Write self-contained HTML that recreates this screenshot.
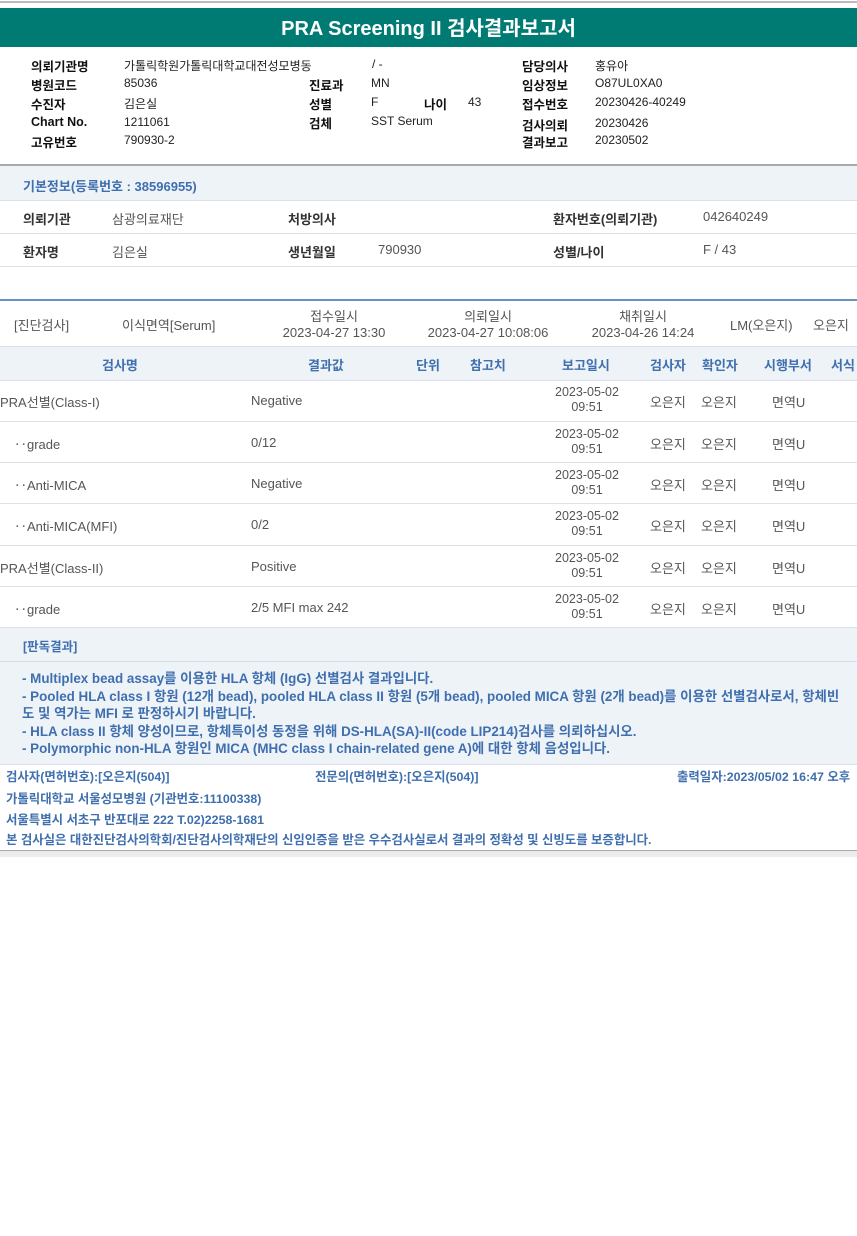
<!DOCTYPE html>
<html><head><meta charset="utf-8"><style>
body{margin:0;width:857px;height:1236px;background:#fff;position:relative;font-family:"Liberation Sans","Noto Sans CJK KR",sans-serif;overflow:hidden}
div{position:absolute;white-space:nowrap}
.t{font-size:12px;color:#222}
.b{font-weight:bold;font-size:12.5px;color:#111}
.g{font-size:13px;color:#555}
.gb{font-size:13px;color:#333;font-weight:bold}
.bl{color:#3f6fae;font-weight:bold;font-size:13px}
.c{text-align:center}
.h{font-size:13px;color:#3f6fae;font-weight:bold}
</style></head><body>
<div style="left:0;top:1px;width:857px;height:2px;background:#bbb"></div>
<div style="left:0;top:8px;width:857px;height:39px;background:#007b73;color:#fff;font-size:20px;font-weight:bold;text-align:center;line-height:42px">PRA Screening II 검사결과보고서</div>

<div class="b" style="left:31px;top:56px">의뢰기관명</div><div class="t" style="left:124px;top:57px">가톨릭학원가톨릭대학교대전성모병동</div><div class="t" style="left:372px;top:57px">/ -</div>
<div class="b" style="left:522px;top:56px">담당의사</div><div class="t" style="left:595px;top:57px">홍유아</div>
<div class="b" style="left:31px;top:75px">병원코드</div><div class="t" style="left:124px;top:76px">85036</div>
<div class="b" style="left:309px;top:75px">진료과</div><div class="t" style="left:371px;top:76px">MN</div>
<div class="b" style="left:522px;top:75px">임상정보</div><div class="t" style="left:595px;top:76px">O87UL0XA0</div>
<div class="b" style="left:31px;top:94px">수진자</div><div class="t" style="left:124px;top:95px">김은실</div>
<div class="b" style="left:309px;top:94px">성별</div><div class="t" style="left:371px;top:95px">F</div>
<div class="b" style="left:424px;top:94px">나이</div><div class="t" style="left:468px;top:95px">43</div>
<div class="b" style="left:522px;top:94px">접수번호</div><div class="t" style="left:595px;top:95px">20230426-40249</div>
<div class="b" style="left:31px;top:115px">Chart No.</div><div class="t" style="left:124px;top:115px">1211061</div>
<div class="b" style="left:309px;top:113px">검체</div><div class="t" style="left:371px;top:114px">SST Serum</div>
<div class="b" style="left:522px;top:115px">검사의뢰</div><div class="t" style="left:595px;top:116px">20230426</div>
<div class="b" style="left:31px;top:132px">고유번호</div><div class="t" style="left:124px;top:133px">790930-2</div>
<div class="b" style="left:522px;top:132px">결과보고</div><div class="t" style="left:595px;top:133px">20230502</div>

<div style="left:0;top:164px;width:857px;height:2px;background:#aaa"></div>
<div style="left:0;top:166px;width:857px;height:34px;background:#eef3f8;border-bottom:1px solid #dde"></div>
<div class="bl" style="left:23px;top:176px">기본정보(등록번호 : 38596955)</div>
<div style="left:0;top:233px;width:857px;height:1px;background:#e2e2e2"></div>
<div style="left:0;top:266px;width:857px;height:1px;background:#e2e2e2"></div>
<div class="gb" style="left:23px;top:209px">의뢰기관</div><div class="g" style="left:112px;top:209px">삼광의료재단</div>
<div class="gb" style="left:288px;top:209px">처방의사</div>
<div class="gb" style="left:553px;top:209px">환자번호(의뢰기관)</div><div class="g" style="left:703px;top:209px">042640249</div>
<div class="gb" style="left:23px;top:242px">환자명</div><div class="g" style="left:112px;top:242px">김은실</div>
<div class="gb" style="left:288px;top:242px">생년월일</div><div class="g" style="left:378px;top:242px">790930</div>
<div class="gb" style="left:553px;top:242px">성별/나이</div><div class="g" style="left:703px;top:242px">F / 43</div>

<div style="left:0;top:299px;width:857px;height:2px;background:#6a92c0"></div>
<div class="g" style="left:14px;top:315px">[진단검사]</div>
<div class="g" style="left:122px;top:315px">이식면역[Serum]</div>
<div class="g c" style="left:270px;top:306px;width:128px">접수일시<br>2023-04-27 13:30</div>
<div class="g c" style="left:418px;top:306px;width:140px">의뢰일시<br>2023-04-27 10:08:06</div>
<div class="g c" style="left:580px;top:306px;width:126px">채취일시<br>2023-04-26 14:24</div>
<div class="g" style="left:730px;top:315px">LM(오은지)</div><div class="g" style="left:813px;top:315px">오은지</div>

<div style="left:0;top:346px;width:857px;height:33px;background:#eef3f8;border-top:1px solid #dde;border-bottom:1px solid #dde"></div>
<div class="h" style="left:102px;top:355px">검사명</div>
<div class="h" style="left:308px;top:355px">결과값</div>
<div class="h" style="left:416px;top:355px">단위</div>
<div class="h" style="left:470px;top:355px">참고치</div>
<div class="h" style="left:562px;top:355px">보고일시</div>
<div class="h" style="left:650px;top:355px">검사자</div>
<div class="h" style="left:702px;top:355px">확인자</div>
<div class="h" style="left:764px;top:355px">시행부서</div>
<div class="h" style="left:831px;top:355px">서식</div>

<div class="g" style="left:0;top:392px">PRA선별(Class-I)</div><div class="g" style="left:251px;top:393px">Negative</div>
<div class="g" style="left:14px;top:434px">‥grade</div><div class="g" style="left:251px;top:435px">0/12</div>
<div class="g" style="left:14px;top:475px">‥Anti-MICA</div><div class="g" style="left:251px;top:476px">Negative</div>
<div class="g" style="left:14px;top:516px">‥Anti-MICA(MFI)</div><div class="g" style="left:251px;top:517px">0/2</div>
<div class="g" style="left:0;top:558px">PRA선별(Class-II)</div><div class="g" style="left:251px;top:559px">Positive</div>
<div class="g" style="left:14px;top:599px">‥grade</div><div class="g" style="left:251px;top:600px">2/5 MFI max 242</div>

<div style="left:0;top:421px;width:857px;height:1px;background:#e2e2e2"></div>
<div style="left:0;top:462px;width:857px;height:1px;background:#e2e2e2"></div>
<div style="left:0;top:503px;width:857px;height:1px;background:#e2e2e2"></div>
<div style="left:0;top:545px;width:857px;height:1px;background:#e2e2e2"></div>
<div style="left:0;top:586px;width:857px;height:1px;background:#e2e2e2"></div>

<div class="g c" style="left:545px;top:385px;width:84px;font-size:12.5px;line-height:15px">2023-05-02<br>09:51</div>
<div class="g c" style="left:545px;top:427px;width:84px;font-size:12.5px;line-height:15px">2023-05-02<br>09:51</div>
<div class="g c" style="left:545px;top:468px;width:84px;font-size:12.5px;line-height:15px">2023-05-02<br>09:51</div>
<div class="g c" style="left:545px;top:509px;width:84px;font-size:12.5px;line-height:15px">2023-05-02<br>09:51</div>
<div class="g c" style="left:545px;top:551px;width:84px;font-size:12.5px;line-height:15px">2023-05-02<br>09:51</div>
<div class="g c" style="left:545px;top:592px;width:84px;font-size:12.5px;line-height:15px">2023-05-02<br>09:51</div>

<div class="g" style="left:650px;top:392px">오은지</div><div class="g" style="left:701px;top:392px">오은지</div><div class="g" style="left:772px;top:392px">면역U</div>
<div class="g" style="left:650px;top:434px">오은지</div><div class="g" style="left:701px;top:434px">오은지</div><div class="g" style="left:772px;top:434px">면역U</div>
<div class="g" style="left:650px;top:475px">오은지</div><div class="g" style="left:701px;top:475px">오은지</div><div class="g" style="left:772px;top:475px">면역U</div>
<div class="g" style="left:650px;top:516px">오은지</div><div class="g" style="left:701px;top:516px">오은지</div><div class="g" style="left:772px;top:516px">면역U</div>
<div class="g" style="left:650px;top:558px">오은지</div><div class="g" style="left:701px;top:558px">오은지</div><div class="g" style="left:772px;top:558px">면역U</div>
<div class="g" style="left:650px;top:599px">오은지</div><div class="g" style="left:701px;top:599px">오은지</div><div class="g" style="left:772px;top:599px">면역U</div>

<div style="left:0;top:627px;width:857px;height:136px;background:#eef3f8;border-top:1px solid #dde;border-bottom:1px solid #dde"></div>
<div style="left:0;top:661px;width:857px;height:1px;background:#d8dee8"></div>
<div class="bl" style="left:23px;top:636px;font-size:12.5px">[판독결과]</div>
<div class="bl" style="left:22px;top:670px;font-size:13.4px;line-height:17.5px;white-space:normal;width:830px">- Multiplex bead assay를 이용한 HLA 항체 (IgG) 선별검사 결과입니다.<br>- Pooled HLA class I 항원 (12개 bead), pooled HLA class II 항원 (5개 bead), pooled MICA 항원 (2개 bead)를 이용한 선별검사로서, 항체빈<br>도 및 역가는 MFI 로 판정하시기 바랍니다.<br>- HLA class II 항체 양성이므로, 항체특이성 동정을 위해 DS-HLA(SA)-II(code LIP214)검사를 의뢰하십시오.<br>- Polymorphic non-HLA 항원인 MICA (MHC class I chain-related gene A)에 대한 항체 음성입니다.</div>

<div class="bl" style="left:6px;top:767px;font-size:12.4px">검사자(면허번호):[오은지(504)]</div>
<div class="bl" style="left:315px;top:767px;font-size:12.4px">전문의(면허번호):[오은지(504)]</div>
<div class="bl" style="left:677px;top:767px;font-size:12.4px">출력일자:2023/05/02 16:47 오후</div>
<div class="bl" style="left:6px;top:789px;font-size:12.4px">가톨릭대학교 서울성모병원 (기관번호:11100338)</div>
<div class="bl" style="left:6px;top:810px;font-size:12.4px">서울특별시 서초구 반포대로 222 T.02)2258-1681</div>
<div class="bl" style="left:6px;top:830px;font-size:12.4px">본 검사실은 대한진단검사의학회/진단검사의학재단의 신임인증을 받은 우수검사실로서 결과의 정확성 및 신빙도를 보증합니다.</div>
<div style="left:0;top:850px;width:857px;height:6px;background:#ececec;border-top:1px solid #aaa"></div>
</body></html>
